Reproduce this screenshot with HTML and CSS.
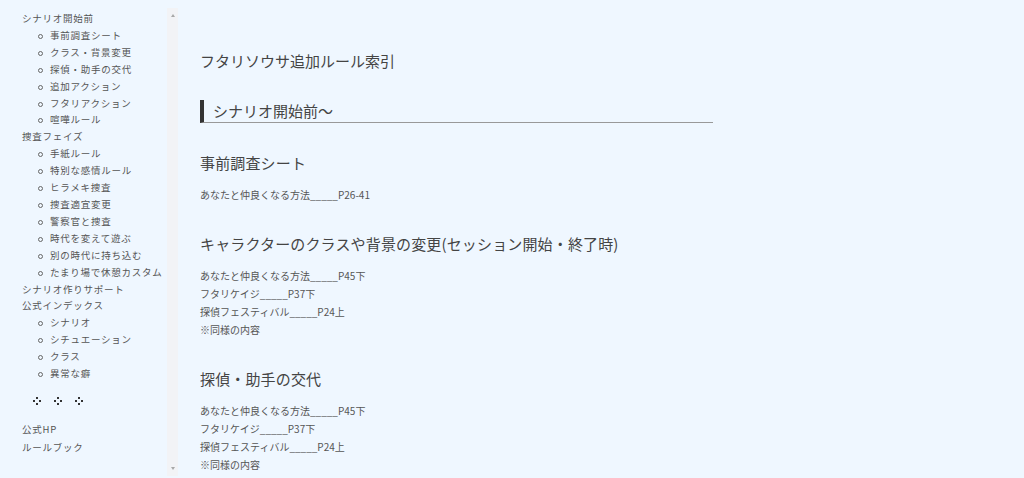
FILE: index.html
```html
<!DOCTYPE html>
<html lang="ja">
<head>
<meta charset="utf-8">
<title>フタリソウサ追加ルール索引</title>
<link rel="stylesheet" href="styles.css">
</head>
<body>
<div class="page">
  <nav class="side">
    <ul class="toc">
      <li>シナリオ開始前
        <ul>
          <li>事前調査シート</li>
          <li>クラス・背景変更</li>
          <li>探偵・助手の交代</li>
          <li>追加アクション</li>
          <li>フタリアクション</li>
          <li>喧嘩ルール</li>
        </ul>
      </li>
      <li>捜査フェイズ
        <ul>
          <li>手紙ルール</li>
          <li>特別な感情ルール</li>
          <li>ヒラメキ捜査</li>
          <li>捜査適宜変更</li>
          <li>警察官と捜査</li>
          <li>時代を変えて遊ぶ</li>
          <li>別の時代に持ち込む</li>
          <li>たまり場で休憩カスタム</li>
        </ul>
      </li>
      <li>シナリオ作りサポート</li>
      <li>公式インデックス
        <ul>
          <li>シナリオ</li>
          <li>シチュエーション</li>
          <li>クラス</li>
          <li>異常な癖</li>
        </ul>
      </li>
    </ul>
    <div class="deco">
      <svg class="dots" viewBox="0 0 8 8"><rect x="3" y="0" width="2" height="2"/><rect x="0" y="3" width="2" height="2"/><rect x="6" y="3" width="2" height="2"/><rect x="3" y="6" width="2" height="2"/></svg>
      <svg class="dots" viewBox="0 0 8 8"><rect x="3" y="0" width="2" height="2"/><rect x="0" y="3" width="2" height="2"/><rect x="6" y="3" width="2" height="2"/><rect x="3" y="6" width="2" height="2"/></svg>
      <svg class="dots" viewBox="0 0 8 8"><rect x="3" y="0" width="2" height="2"/><rect x="0" y="3" width="2" height="2"/><rect x="6" y="3" width="2" height="2"/><rect x="3" y="6" width="2" height="2"/></svg>
    </div>
    <ul class="links">
      <li>公式HP</li>
      <li>ルールブック</li>
    </ul>
    <span class="arrow arrow-up"></span>
    <span class="arrow arrow-down"></span>
  </nav>
  <main class="main">
    <h1 class="title">フタリソウサ追加ルール索引</h1>
    <h2 class="chapter">シナリオ開始前〜</h2>
    <section class="sec">
      <h3 class="sec-h">事前調査シート</h3>
      <p class="ref">あなたと仲良くなる方法_____P26-41</p>
    </section>
    <section class="sec">
      <h3 class="sec-h">キャラクターのクラスや背景の変更(セッション開始・終了時)</h3>
      <p class="ref">あなたと仲良くなる方法_____P45下</p>
      <p class="ref">フタリケイジ_____P37下</p>
      <p class="ref">探偵フェスティバル_____P24上</p>
      <p class="ref">※同様の内容</p>
    </section>
    <section class="sec">
      <h3 class="sec-h">探偵・助手の交代</h3>
      <p class="ref">あなたと仲良くなる方法_____P45下</p>
      <p class="ref">フタリケイジ_____P37下</p>
      <p class="ref">探偵フェスティバル_____P24上</p>
      <p class="ref">※同様の内容</p>
    </section>
  </main>
</div>
</body>
</html>
```

FILE: styles.css
```css
html, body {
  margin: 0;
  padding: 0;
  background: #eff7ff;
  height: 100%;
  overflow: hidden;
}
body {
  font-family: "Noto Sans CJK JP", "Noto Sans", sans-serif;
  color: #444;
}
.page {
  display: flex;
  align-items: flex-start;
}
.side {
  position: relative;
  flex: 0 0 178px;
  width: 178px;
  height: 468px;
  margin-top: 8px;
  box-sizing: border-box;
  padding-top: 2px;
  border-right: 11px solid #f2f3f6;
}
.arrow {
  position: absolute;
  right: -8px;
  width: 0;
  height: 0;
  border-left: 2.5px solid transparent;
  border-right: 2.5px solid transparent;
}
.arrow-up {
  top: 6px;
  border-bottom: 3px solid #a8a8a8;
}
.arrow-down {
  bottom: 6px;
  border-top: 3px solid #a8a8a8;
}
.toc, .toc ul, .links {
  list-style: none;
  margin: 0;
  padding: 0;
}
.toc li, .links li {
  font-size: 9.5px;
  line-height: 16.9px;
  letter-spacing: 0.75px;
  color: #555;
}
.toc > li, .links > li {
  padding-left: 22px;
}
.links li {
  line-height: 18px;
}
.toc ul {
  padding-left: 28px;
}
.toc ul li {
  position: relative;
}
.toc ul li::before {
  content: "";
  position: absolute;
  left: -12px;
  top: 7px;
  width: 3px;
  height: 3px;
  border: 1px solid #666;
  border-radius: 50%;
}
.deco {
  display: flex;
  gap: 13px;
  padding-left: 33px;
  height: 28px;
  align-items: center;
  margin-top: 5px;
  margin-bottom: 5px;
}
.dots {
  width: 8px;
  height: 8px;
  fill: #333;
}
.main {
  margin-left: 22px;
  padding-top: 50px;
}
.title {
  margin: 0 0 28px;
  font-size: 15px;
  line-height: 22px;
  font-weight: normal;
  color: #444;
}
.chapter {
  width: 500px;
  margin: 0 0 29px;
  font-size: 15px;
  line-height: 22px;
  font-weight: normal;
  color: #444;
  border-left: 4px solid #333;
  border-bottom: 1px solid #999;
  padding-left: 9px;
}
.sec {
  margin-bottom: 29px;
}
.sec-h {
  margin: 0 0 12px;
  font-size: 15px;
  line-height: 22px;
  font-weight: normal;
  letter-spacing: 0.15px;
  color: #444;
}
.ref {
  margin: 0;
  font-size: 10px;
  line-height: 18px;
  color: #555;
}
```
